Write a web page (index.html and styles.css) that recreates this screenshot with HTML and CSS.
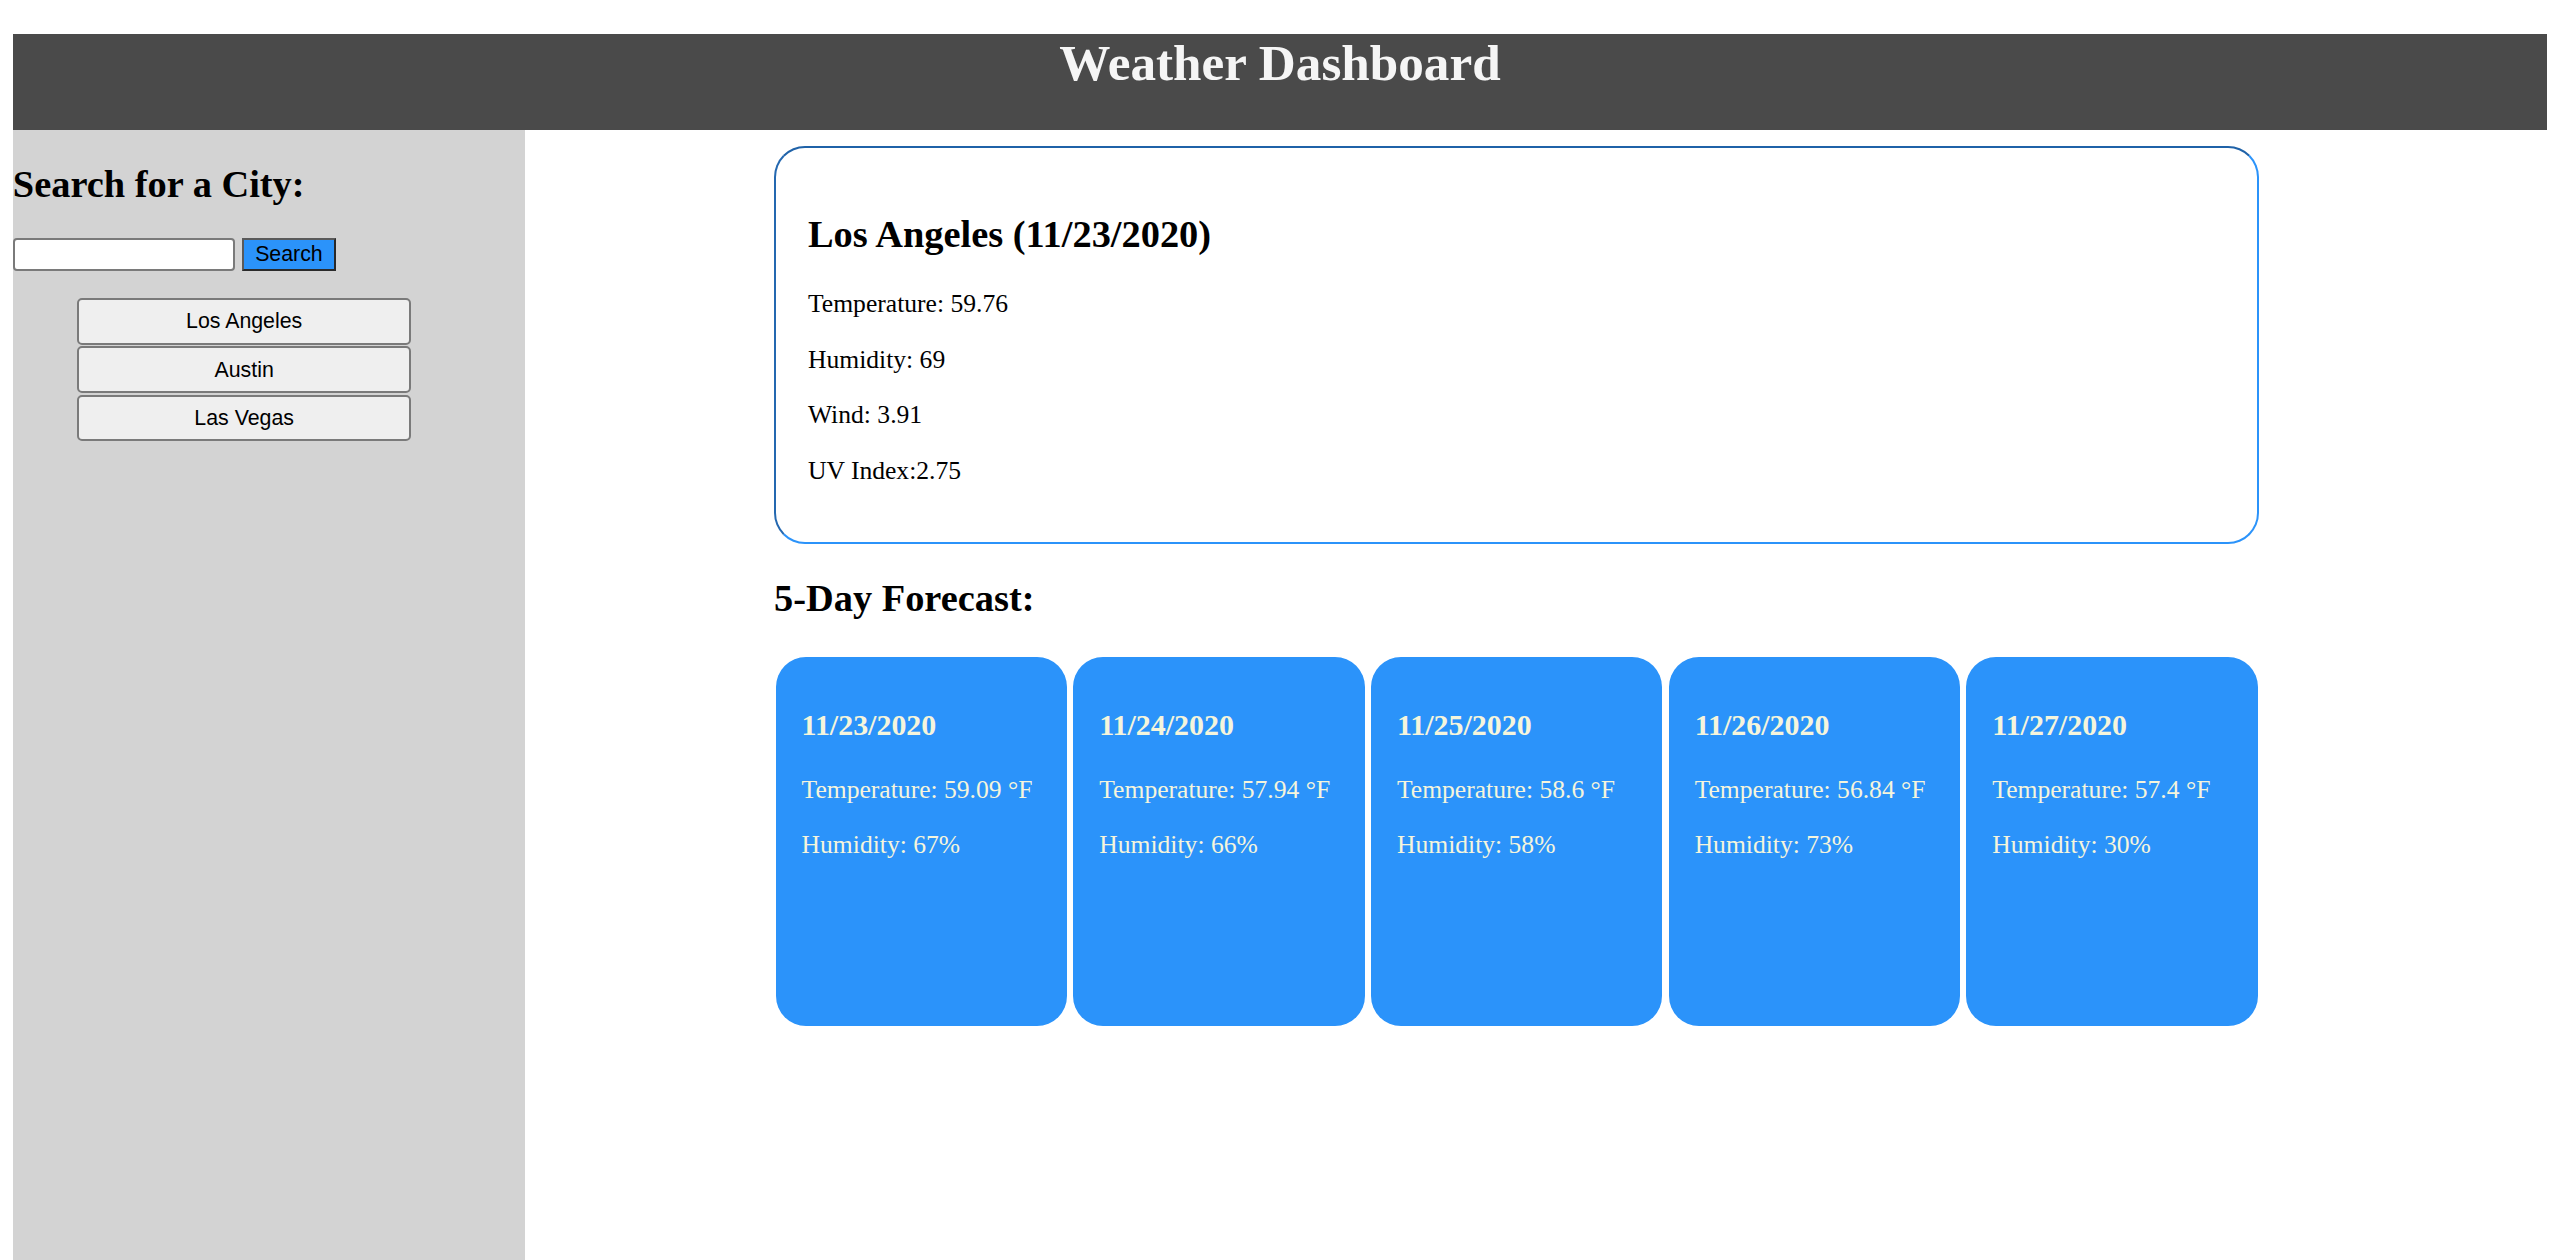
FILE: index.html
```html
<!DOCTYPE html>
<html lang="en">
<head>
<meta charset="utf-8">
<title>Weather Dashboard</title>
<link rel="stylesheet" href="styles.css">
</head>
<body>
<header class="topbar">
  <h1 class="title">Weather Dashboard</h1>
</header>
<div class="layout">
  <aside class="sidebar">
    <h2 class="side-heading">Search for a City:</h2>
    <div class="search-row">
      <input class="search-input" type="text">
      <button class="search-btn" type="button">Search</button>
    </div>
    <ul class="history">
      <li><button class="city-btn" type="button">Los Angeles</button></li>
      <li><button class="city-btn" type="button">Austin</button></li>
      <li><button class="city-btn" type="button">Las Vegas</button></li>
    </ul>
  </aside>
  <main class="content">
    <section class="current">
      <h2 class="current-title">Los Angeles (11/23/2020)</h2>
      <p class="stat">Temperature: 59.76</p>
      <p class="stat">Humidity: 69</p>
      <p class="stat">Wind: 3.91</p>
      <p class="stat">UV Index:2.75</p>
    </section>
    <h2 class="forecast-heading">5-Day Forecast:</h2>
    <div class="forecast">
      <div class="day">
        <h3 class="day-date">11/23/2020</h3>
        <p class="day-stat">Temperature: 59.09 °F</p>
        <p class="day-stat">Humidity: 67%</p>
      </div>
      <div class="day">
        <h3 class="day-date">11/24/2020</h3>
        <p class="day-stat">Temperature: 57.94 °F</p>
        <p class="day-stat">Humidity: 66%</p>
      </div>
      <div class="day">
        <h3 class="day-date">11/25/2020</h3>
        <p class="day-stat">Temperature: 58.6 °F</p>
        <p class="day-stat">Humidity: 58%</p>
      </div>
      <div class="day">
        <h3 class="day-date">11/26/2020</h3>
        <p class="day-stat">Temperature: 56.84 °F</p>
        <p class="day-stat">Humidity: 73%</p>
      </div>
      <div class="day">
        <h3 class="day-date">11/27/2020</h3>
        <p class="day-stat">Temperature: 57.4 °F</p>
        <p class="day-stat">Humidity: 30%</p>
      </div>
    </div>
  </main>
</div>
</body>
</html>
```

FILE: styles.css
```css
html, body {
  height: 100%;
}

body {
  margin: 0;
  padding: 0 12.8px;
  font-family: "Liberation Serif", "Times New Roman", serif;
  color: #000;
  background: #fff;
  overflow: hidden;
}

.topbar {
  margin-top: 34.3px;
  height: 95.7px;
  background: #4a4a4a;
}

.title {
  margin: 0;
  text-align: center;
  font-size: 51.2px;
  font-weight: bold;
  line-height: 57px;
  color: #f5f5f5;
}

.layout {
  display: flex;
  height: calc(100vh - 130px);
}

.sidebar {
  flex: none;
  width: 512px;
  background: #d3d3d3;
}

.side-heading {
  margin: 31.9px 0;
  font-size: 38.4px;
  font-weight: bold;
  line-height: normal;
}

.search-row {
  display: flex;
  align-items: flex-start;
  gap: 6.7px;
}

.search-input {
  box-sizing: border-box;
  width: 222.6px;
  height: 33.4px;
  margin: 0;
  border: 2px solid #7a7a7a;
  border-radius: 4px;
  background: #fff;
  padding: 0 4px;
  font-family: "Liberation Sans", Arial, sans-serif;
  font-size: 21.3px;
}

.search-btn {
  box-sizing: border-box;
  height: 33.4px;
  width: 93.7px;
  margin: 0;
  padding: 0;
  background: #2b93fa;
  border-style: solid;
  border-width: 2px;
  border-color: #5a5a5a #2a2a2a #2a2a2a #5a5a5a;
  font-family: "Liberation Sans", Arial, sans-serif;
  font-size: 21.33px;
  color: #000;
}

.history {
  list-style: none;
  margin: 27px 0 0;
  padding: 0 0 0 64px;
  display: flex;
  flex-direction: column;
  gap: 1.6px;
}

.city-btn {
  display: block;
  box-sizing: border-box;
  width: 334.7px;
  height: 46.6px;
  margin: 0;
  padding: 1px 0 0;
  background: #efefef;
  border: 2px solid #7a7a7a;
  border-radius: 5px;
  font-family: "Liberation Sans", Arial, sans-serif;
  font-size: 21.33px;
  color: #000;
}

.content {
  flex: 1;
  padding-left: 249.2px;
  padding-top: 16px;
}

.current {
  box-sizing: border-box;
  width: 1485.3px;
  padding: 32px;
  border-style: solid;
  border-width: 2px;
  border-color: #1f62a8 #2b93fa #2b93fa #2468b0;
  border-radius: 31px;
}

.current-title {
  margin: 31.9px 0 33.4px;
  font-size: 38.4px;
  font-weight: bold;
  line-height: normal;
}

.stat {
  margin: 25.6px 0;
  font-size: 25.6px;
  line-height: 30px;
}

.stat:last-child {
  margin-bottom: 24px;
}

.forecast-heading {
  margin: 31.9px 0 36.7px;
  font-size: 38.4px;
  font-weight: bold;
  line-height: normal;
}

.forecast {
  display: flex;
  gap: 6.3px;
  width: 1485.3px;
  box-sizing: border-box;
  padding: 0 1.6px;
}

.day {
  flex: 1;
  box-sizing: border-box;
  height: 369.7px;
  padding: 24px 26px;
  background: #2b93fa;
  border-radius: 30px;
  color: #f5f5dc;
}

.day-date {
  margin: 27px 0 33px;
  font-size: 29.95px;
  font-weight: bold;
  line-height: normal;
}

.day-stat {
  margin: 25.6px 0;
  font-size: 25.6px;
  line-height: 30px;
  white-space: nowrap;
}
```
